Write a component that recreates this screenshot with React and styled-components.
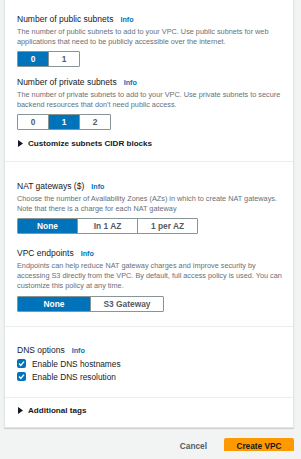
import React from 'react';
import styled, { createGlobalStyle } from 'styled-components';

const GlobalStyle = createGlobalStyle`
  body {
    margin: 0;
    background: #f2f3f3;
    font-family: "Liberation Sans", Arial, sans-serif;
    color: #16191f;
    overflow: hidden;
  }
`;

const Page = styled.div`
  width: 301px;
  height: 459px;
  box-sizing: border-box;
  padding: 0 7px 0 4px;
`;

const Card = styled.div`
  margin-top: -8px;
  background: #fff;
  border: 1px solid #e3e6e6;
  box-shadow: 0 1px 1px rgba(0, 28, 36, 0.15);
`;

const Section = styled.div`
  padding: ${(p) => p.$pad};
  border-top: ${(p) => (p.$first ? 'none' : '1px solid #eaeded')};
`;

const Field = styled.div`
  margin-top: ${(p) => p.$mt || 0}px;
`;

const LabelRow = styled.div`
  display: flex;
  align-items: center;
  gap: 7px;
  height: 14px;
`;

const Label = styled.span`
  font-size: 8.5px;
  color: #16191f;
`;

const Info = styled.span`
  font-size: 7.2px;
  font-weight: 700;
  color: #0073bb;
`;

const Desc = styled.p`
  margin: 1px 0 0;
  font-size: 7.3px;
  line-height: 10px;
  white-space: nowrap;
  color: #687078;
`;

const Segmented = styled.div`
  display: inline-flex;
  margin-top: ${(p) => p.$mt || 4}px;
  border: 1px solid #879596;
  border-radius: 1px;
  height: 16px;
  box-sizing: border-box;
`;

const SegButton = styled.div`
  width: ${(p) => p.$w}px;
  display: flex;
  align-items: center;
  justify-content: center;
  font-size: 8.4px;
  font-weight: 700;
  background: ${(p) => (p.$active ? '#0073bb' : '#fff')};
  color: ${(p) => (p.$active ? '#fff' : '#545b64')};
  & + & {
    border-left: 1px solid #879596;
  }
`;

const Expander = styled.div`
  display: flex;
  align-items: center;
  gap: 5px;
  height: 14px;
  margin-top: ${(p) => p.$mt || 0}px;
  padding-left: 1px;
  font-size: 8.1px;
  font-weight: 700;
  color: #16191f;
`;

const CheckRow = styled.label`
  display: flex;
  align-items: center;
  gap: 6px;
  height: 13px;
  font-size: 8.3px;
  color: #16191f;
`;

const Box = styled.span`
  width: 9px;
  height: 9px;
  border-radius: 2px;
  background: #0073bb;
  display: flex;
  align-items: center;
  justify-content: center;
`;

const Footer = styled.div`
  display: flex;
  justify-content: flex-end;
  align-items: center;
  gap: 7px;
  margin-top: 10px;
`;

const Button = styled.button`
  height: 16px;
  padding: 0 ${(p) => (p.$primary ? 0 : 10)}px;
  width: ${(p) => (p.$primary ? '70px' : 'auto')};
  border: none;
  border-radius: 2px;
  font-family: inherit;
  font-size: 8.3px;
  font-weight: 700;
  background: ${(p) => (p.$primary ? '#ff9900' : 'transparent')};
  color: ${(p) => (p.$primary ? '#16191f' : '#545b64')};
`;

const Caret = () => (
  <svg width="5" height="7" viewBox="0 0 5 7">
    <polygon points="0,0 5,3.5 0,7" fill="#16191f" />
  </svg>
);

const Check = () => (
  <svg width="7" height="7" viewBox="0 0 7 7">
    <polyline points="1,3.6 2.8,5.4 6,1.6" fill="none" stroke="#fff" strokeWidth="1.4" />
  </svg>
);

const Segments = ({ items, active, w, mt }) => (
  <Segmented $mt={mt}>
    {items.map((it, i) => (
      <SegButton key={it} $w={w} $active={i === active}>
        {it}
      </SegButton>
    ))}
  </Segmented>
);

const Title = ({ children }) => (
  <LabelRow>
    <Label>{children}</Label>
    <Info>Info</Info>
  </LabelRow>
);

export default function App() {
  return (
    <Page>
      <GlobalStyle />
      <Card>
        <Section $first $pad="19px 12px 11px">
          <Field>
            <Title>Number of public subnets</Title>
            <Desc>
              The number of public subnets to add to your VPC. Use public subnets for web
              <br />
              applications that need to be publicly accessible over the internet.
            </Desc>
            <Segments items={['0', '1']} active={0} w={30} />
          </Field>
          <Field $mt={8}>
            <Title>Number of private subnets</Title>
            <Desc>
              The number of private subnets to add to your VPC. Use private subnets to secure
              <br />
              backend resources that don't need public access.
            </Desc>
            <Segments items={['0', '1', '2']} active={1} w={30} />
          </Field>
          <Expander $mt={6}>
            <Caret />
            Customize subnets CIDR blocks
          </Expander>
        </Section>

        <Section $pad="17px 12px 14px">
          <Field>
            <Title>NAT gateways ($)</Title>
            <Desc>
              Choose the number of Availability Zones (AZs) in which to create NAT gateways.
              <br />
              Note that there is a charge for each NAT gateway
            </Desc>
            <Segments items={['None', 'In 1 AZ', '1 per AZ']} active={0} w={59} />
          </Field>
          <Field $mt={12}>
            <Title>VPC endpoints</Title>
            <Desc>
              Endpoints can help reduce NAT gateway charges and improve security by
              <br />
              accessing S3 directly from the VPC. By default, full access policy is used. You can
              <br />
              customize this policy at any time.
            </Desc>
            <Segments items={['None', 'S3 Gateway']} active={0} w={72} mt={5} />
          </Field>
        </Section>

        <Section $pad="16px 12px 14px">
          <Title>DNS options</Title>
          <CheckRow>
            <Box><Check /></Box>
            Enable DNS hostnames
          </CheckRow>
          <CheckRow>
            <Box><Check /></Box>
            Enable DNS resolution
          </CheckRow>
        </Section>

        <Section $pad="5px 12px 10px">
          <Expander>
            <Caret />
            Additional tags
          </Expander>
        </Section>
      </Card>
      <Footer>
        <Button>Cancel</Button>
        <Button $primary>Create VPC</Button>
      </Footer>
    </Page>
  );
}
